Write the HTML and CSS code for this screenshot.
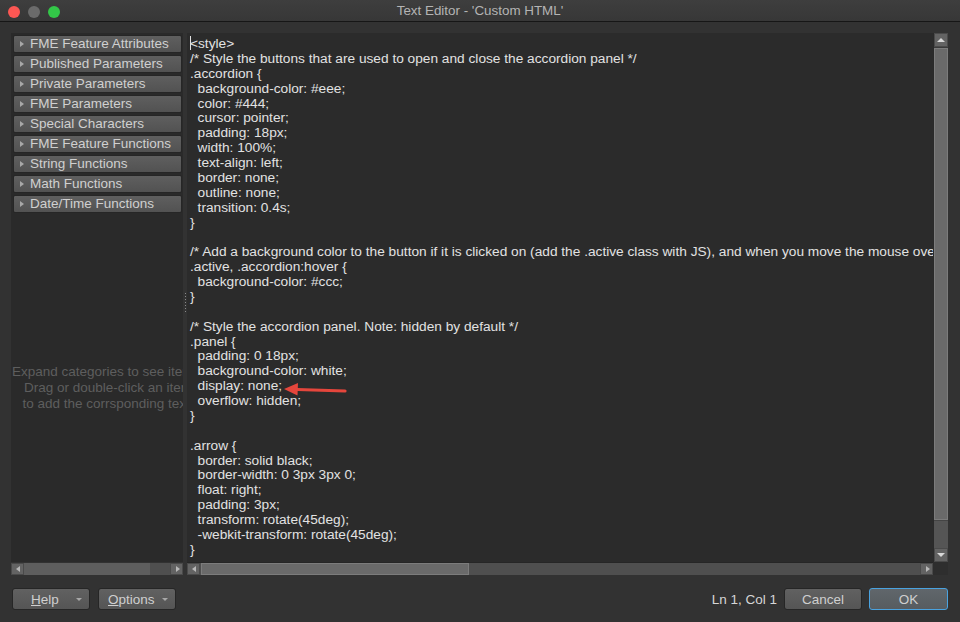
FILE: index.html
```html
<!DOCTYPE html>
<html lang="en">
<head>
  <meta charset="UTF-8">
  <title>Text Editor - 'Custom HTML'</title>
  <link rel="stylesheet" href="styles.css">
</head>
<body>

  <div class="titlebar">
    <div class="lights">
      <span class="light red"></span>
      <span class="light gray"></span>
      <span class="light green"></span>
    </div>
    <div class="title">Text Editor - 'Custom HTML'</div>
  </div>

  <div class="main">
    <!-- Left: categories -->
    <div class="side">
      <div class="tree">
        <div class="cat">FME Feature Attributes</div>
        <div class="cat">Published Parameters</div>
        <div class="cat">Private Parameters</div>
        <div class="cat">FME Parameters</div>
        <div class="cat">Special Characters</div>
        <div class="cat">FME Feature Functions</div>
        <div class="cat">String Functions</div>
        <div class="cat">Math Functions</div>
        <div class="cat">Date/Time Functions</div>
        <div class="hint">
          <div>Expand categories to see items.</div>
          <div>Drag or double-click an item</div>
          <div>to add the corrsponding text.</div>
        </div>
      </div>
      <div class="hscroll side-scroll">
        <span class="sb-btn left"></span>
        <span class="sb-thumb side-thumb"></span>
        <span class="sb-track"></span>
        <span class="sb-btn right"></span>
      </div>
    </div>

    <div class="splitter"><span class="grip"></span></div>

    <!-- Right: editor -->
    <div class="editor">
      <div class="editor-row">
        <div class="code"><span class="caret"></span>&lt;style&gt;
/* Style the buttons that are used to open and close the accordion panel */
.accordion {
  background-color: #eee;
  color: #444;
  cursor: pointer;
  padding: 18px;
  width: 100%;
  text-align: left;
  border: none;
  outline: none;
  transition: 0.4s;
}

/* Add a background color to the button if it is clicked on (add the .active class with JS), and when you move the mouse over it (hover) */
.active, .accordion:hover {
  background-color: #ccc;
}

/* Style the accordion panel. Note: hidden by default */
.panel {
  padding: 0 18px;
  background-color: white;
  display: none;
  overflow: hidden;
}

.arrow {
  border: solid black;
  border-width: 0 3px 3px 0;
  float: right;
  padding: 3px;
  transform: rotate(45deg);
  -webkit-transform: rotate(45deg);
}</div>
        <div class="vscroll">
          <span class="sb-btn up"></span>
          <span class="sb-thumb v-thumb"></span>
          <span class="sb-track"></span>
          <span class="sb-btn down"></span>
        </div>
        <svg class="pointer" width="70" height="14" viewBox="0 0 70 14">
          <path d="M62 8 L14 6.5" stroke="#e5463c" stroke-width="3.2" stroke-linecap="round" fill="none"/>
          <path d="M1 6 L15 0 L14.5 12.5 Z" fill="#e5463c"/>
        </svg>
      </div>
      <div class="editor-bottom">
        <div class="hscroll code-scroll">
          <span class="sb-btn left"></span>
          <span class="sb-thumb code-thumb"></span>
          <span class="sb-track"></span>
          <span class="sb-btn right"></span>
        </div>
        <div class="corner"></div>
      </div>
    </div>
  </div>

  <div class="footer">
    <button class="btn drop"><u>H</u>elp</button>
    <button class="btn drop"><u>O</u>ptions</button>
    <div class="spacer"></div>
    <span class="status">Ln 1, Col 1</span>
    <button class="btn">Cancel</button>
    <button class="btn ok">OK</button>
  </div>

</body>
</html>
```

FILE: styles.css
```css
html, body {
  margin: 0;
  height: 100%;
}

body {
  font-family: 'Liberation Sans', Arial, sans-serif;
  font-size: 13.5px;
  background: #323232;
  color: #d6d6d6;
  display: flex;
  flex-direction: column;
  overflow: hidden;
}

.titlebar {
  height: 21px;
  flex: none;
  position: relative;
  background: linear-gradient(#3e3e3e, #373737);
  border-bottom: 1px solid #161616;
  display: flex;
  align-items: center;
  justify-content: center;
}

.lights {
  position: absolute;
  left: 8px;
  top: 6px;
  display: flex;
  gap: 8px;
}

.light {
  width: 12px;
  height: 12px;
  border-radius: 50%;
}

.red { background: #fc5753; }
.gray { background: #6b6b6b; }
.green { background: #33c748; }

.title {
  color: #b4b4b4;
  font-size: 13.4px;
}

.main {
  height: 542px;
  flex: none;
  display: flex;
  padding: 11px 12px 0 11px;
}

/* left side */
.side {
  width: 172px;
  flex: none;
  display: flex;
  flex-direction: column;
}

.tree {
  flex: 1;
  background: #2a2a2a;
  padding: 2px 1px 0 2px;
  overflow: hidden;
  display: flex;
  flex-direction: column;
  gap: 2px;
}

.cat {
  height: 16px;
  line-height: 16px;
  flex: none;
  border: 1px solid #262626;
  border-radius: 2px;
  background: linear-gradient(#5f5f5f, #525252);
  color: #d0d0d0;
  padding-left: 16px;
  position: relative;
  white-space: nowrap;
}

.cat::before {
  content: "";
  position: absolute;
  left: 6px;
  top: 5px;
  border-left: 4px solid #a8a8a8;
  border-top: 3px solid transparent;
  border-bottom: 3px solid transparent;
}

.hint {
  margin-top: 149px;
  color: #5e5e5e;
  line-height: 16px;
  white-space: nowrap;
  display: flex;
  flex-direction: column;
  align-items: center;
  flex: none;
  width: 240px;
  margin-left: -25px;
}

.splitter {
  width: 4px;
  flex: none;
  position: relative;
}

.grip {
  position: absolute;
  left: 2px;
  top: 260px;
  width: 1px;
  height: 20px;
  background: repeating-linear-gradient(#8a8a8a 0 1px, transparent 1px 3px);
}

/* editor */
.editor {
  flex: 1;
  min-width: 0;
  display: flex;
  flex-direction: column;
}

.editor-row {
  flex: 1;
  display: flex;
  position: relative;
  min-height: 0;
}

.code {
  flex: 1;
  min-width: 0;
  background: #2b2b2b;
  color: #e2e2e2;
  white-space: pre;
  overflow: hidden;
  line-height: 14.88px;
  padding: 3px 0 0 3px;
  font-size: 13.7px;
}

.caret {
  display: inline-block;
  width: 1px;
  height: 14px;
  background: #e0e0e0;
  vertical-align: -2px;
  margin-right: -1px;
}

.pointer {
  position: absolute;
  left: 96px;
  top: 350px;
}

.vscroll {
  width: 14px;
  flex: none;
  display: flex;
  flex-direction: column;
  background: #3a3a3a;
  border-left: 1px solid #2a2a2a;
}

.editor-bottom {
  height: 13px;
  display: flex;
}

.hscroll {
  flex: 1;
  display: flex;
  height: 13px;
  background: #4f4f4f;
}

.side-scroll {
  flex: none;
  margin-top: 1px;
  height: 12px;
}

.code-scroll {
  border-top: 1px solid #262626;
  height: 12px;
}

.corner {
  width: 15px;
  background: #2e2e2e;
}

.sb-btn {
  flex: none;
  width: 13px;
  height: 12px;
  background: #636363;
  border: 1px solid #4a4a4a;
  box-sizing: border-box;
  position: relative;
}

.vscroll .sb-btn {
  width: 14px;
  height: 14px;
}

.sb-btn::after {
  content: "";
  position: absolute;
  left: 50%;
  top: 50%;
}

.left::after {
  margin: -3px 0 0 -2px;
  border-right: 4px solid #b8b8b8;
  border-top: 3px solid transparent;
  border-bottom: 3px solid transparent;
}

.right::after {
  margin: -3px 0 0 -1px;
  border-left: 4px solid #b8b8b8;
  border-top: 3px solid transparent;
  border-bottom: 3px solid transparent;
}

.up::after {
  margin: -2px 0 0 -4px;
  border-bottom: 4px solid #d8d8d8;
  border-left: 4px solid transparent;
  border-right: 4px solid transparent;
}

.down::after {
  margin: -2px 0 0 -4px;
  border-top: 4px solid #d8d8d8;
  border-left: 4px solid transparent;
  border-right: 4px solid transparent;
}

.sb-thumb {
  flex: none;
  background: #6a6a6a;
  border: 1px solid #7c7c7c;
  box-sizing: border-box;
}

.side-thumb {
  width: 126px;
  background: #5e5e5e;
  border-color: #5e5e5e;
}

.code-thumb {
  width: 268px;
  margin-left: 1px;
}

.v-thumb {
  height: 472px;
  margin-top: 1px;
}

.sb-track {
  flex: 1;
  background: #4f4f4f;
}

.vscroll .sb-track {
  background: #555;
  border-top: 1px solid #444;
}

/* footer */
.footer {
  display: flex;
  align-items: center;
  padding: 13px 12px 0 12px;
  gap: 8px;
}

.btn {
  font-family: 'Liberation Sans', Arial, sans-serif;
  font-size: 13.5px;
  height: 22px;
  width: 78px;
  border: 1px solid #262626;
  border-radius: 3px;
  background: linear-gradient(#616161, #555);
  color: #cfcfcf;
  padding: 0;
  position: relative;
}

.drop {
  text-align: left;
  padding-left: 18px;
}

.drop + .drop {
  padding-left: 9px;
}

.drop::after {
  content: "";
  position: absolute;
  right: 7px;
  top: 9px;
  border-top: 3px solid #a8a8a8;
  border-left: 3px solid transparent;
  border-right: 3px solid transparent;
}

.spacer {
  flex: 1;
}

.status {
  color: #d6d6d6;
  margin-right: -1px;
}

.ok {
  width: 79px;
  border-color: #4aa3e0;
  background: linear-gradient(#60666b, #575c60);
  margin-left: -1px;
}
```
